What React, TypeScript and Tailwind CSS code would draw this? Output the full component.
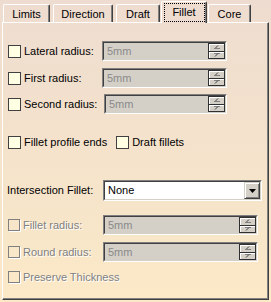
import React from "react";

const tabs = [
  { label: "Limits", width: "w-[47px]", ml: "ml-0" },
  { label: "Direction", width: "w-[60px]", ml: "ml-[3px]" },
  { label: "Draft", width: "w-[44px]", ml: "ml-[3px]" },
  { label: "Fillet", width: "w-[46px]", ml: "ml-px", active: true },
  { label: "Core", width: "w-[43px]", ml: "ml-px" },
];

const disabledText = "text-[#808080] [text-shadow:1px_1px_0_#ffffff]";

function Checkbox({ disabled }: { disabled?: boolean }) {
  if (disabled) {
    return (
      <span className="block h-[12px] w-[12px] shrink-0 border border-[#808080] shadow-[1px_1px_0_#ffffff]" />
    );
  }
  return (
    <span className="block h-[13px] w-[13px] shrink-0 border border-[#404040] bg-[#ffffe4]" />
  );
}

function SpinField({ className }: { className: string }) {
  return (
    <div
      className={`flex h-[20px] border border-t-[#808080] border-l-[#808080] border-r-white border-b-white ${className}`}
    >
      <div className="flex flex-1 border border-t-[#404040] border-l-[#404040] border-r-[#d4d0c8] border-b-[#d4d0c8] bg-[#d4d0c8]">
        <span className="flex-1 pl-[3px] leading-[16px] text-[#8a8a8a]">5mm</span>
        <div className="flex w-[17px] flex-col border border-[#303030]">
          <span className="flex flex-1 items-center justify-center border-b border-[#303030] bg-[#d4d0c8] shadow-[inset_1px_1px_0_#ffffff]">
            <svg width="6" height="4" viewBox="0 0 6 4">
              <path d="M1 3.5 L4 0.5" stroke="#404040" strokeWidth="1" />
              <path d="M0 3.5 H6" stroke="#808080" strokeWidth="1" />
            </svg>
          </span>
          <span className="flex flex-1 items-center justify-center bg-[#d4d0c8] shadow-[inset_1px_1px_0_#ffffff]">
            <svg width="6" height="4" viewBox="0 0 6 4">
              <path d="M0 0.5 H6" stroke="#808080" strokeWidth="1" />
              <path d="M1 3.5 L4 0.5" stroke="#404040" strokeWidth="1" />
            </svg>
          </span>
        </div>
      </div>
    </div>
  );
}

function RadiusRow({
  label,
  labelWidth,
  fieldClass,
  disabled,
  className,
}: {
  label: string;
  labelWidth: string;
  fieldClass: string;
  disabled?: boolean;
  className: string;
}) {
  return (
    <div className={`flex h-[20px] items-center ${className}`}>
      <div className={`flex items-center gap-[3px] ${labelWidth}`}>
        <Checkbox disabled={disabled} />
        <span className={disabled ? disabledText : "text-black"}>{label}</span>
      </div>
      <SpinField className={fieldClass} />
    </div>
  );
}

export default function App() {
  return (
    <div className="h-[302px] w-[271px] overflow-hidden bg-gradient-to-b from-[#eedcd0] to-[#fbe9c7] font-['Liberation_Sans',sans-serif] text-[11px] text-black">
      <div className="relative z-10 flex h-[22px] items-end pl-[3px]">
        {tabs.map((tab) => (
          <div
            key={tab.label}
            className={`flex items-center justify-center rounded-t-[2px] border-l border-t border-r border-l-white border-t-white border-r-[#404040] shadow-[inset_-1px_0_#808080] ${tab.width} ${tab.ml} ${
              tab.active ? "-mb-px h-[22px] bg-[#eedcd0] pb-px" : "h-[18px]"
            }`}
          >
            {tab.active ? (
              <span className="flex h-[19px] w-[41px] items-center justify-center border border-dotted border-black">
                {tab.label}
              </span>
            ) : (
              <span className="leading-[14px]">{tab.label}</span>
            )}
          </div>
        ))}
      </div>

      <div className="ml-[2px] flex h-[278px] w-[267px] flex-col border border-l-white border-t-white border-r-[#404040] border-b-[#404040] pl-[5px] pt-[18px] shadow-[inset_-1px_-1px_0_#808080]">
        <RadiusRow label="Lateral radius:" labelWidth="w-[94px]" fieldClass="w-[125px]" className="" />
        <RadiusRow label="First radius:" labelWidth="w-[94px]" fieldClass="w-[125px]" className="mt-[7px]" />
        <RadiusRow label="Second radius:" labelWidth="w-[96px]" fieldClass="w-[123px]" className="mt-[6px]" />

        <div className="mt-[18px] flex h-[20px] items-center">
          <div className="flex items-center gap-[3px]">
            <Checkbox />
            <span>Fillet profile ends</span>
          </div>
          <div className="ml-[9px] flex items-center gap-[3px]">
            <Checkbox />
            <span>Draft fillets</span>
          </div>
        </div>

        <div className="mt-[28px] flex h-[21px] items-center">
          <span className="-ml-px w-[96px]">Intersection Fillet:</span>
          <div className="flex h-[21px] w-[159px] border border-t-[#808080] border-l-[#808080] border-r-white border-b-white">
            <div className="flex flex-1 items-center border border-t-[#404040] border-l-[#404040] border-r-[#d4d0c8] border-b-[#d4d0c8] bg-white">
              <span className="flex-1 pl-[3px]">None</span>
              <span className="flex h-full w-[16px] items-center justify-center border border-t-[#d4d0c8] border-l-[#d4d0c8] border-r-[#404040] border-b-[#404040] bg-[#d4d0c8] shadow-[inset_1px_1px_0_#ffffff,inset_-1px_-1px_0_#808080]">
                <svg width="7" height="4" viewBox="0 0 7 4">
                  <path d="M0 0 H7 L3.5 4 Z" fill="#000000" />
                </svg>
              </span>
            </div>
          </div>
        </div>

        <RadiusRow
          label="Fillet radius:"
          labelWidth="w-[95px]"
          fieldClass="w-[155px]"
          disabled
          className="mt-[14px]"
        />
        <RadiusRow
          label="Round radius:"
          labelWidth="w-[95px]"
          fieldClass="w-[155px]"
          disabled
          className="mt-[7px]"
        />

        <div className="mt-[5px] flex h-[20px] items-center gap-[3px]">
          <Checkbox disabled />
          <span className={disabledText}>Preserve Thickness</span>
        </div>
      </div>
    </div>
  );
}
